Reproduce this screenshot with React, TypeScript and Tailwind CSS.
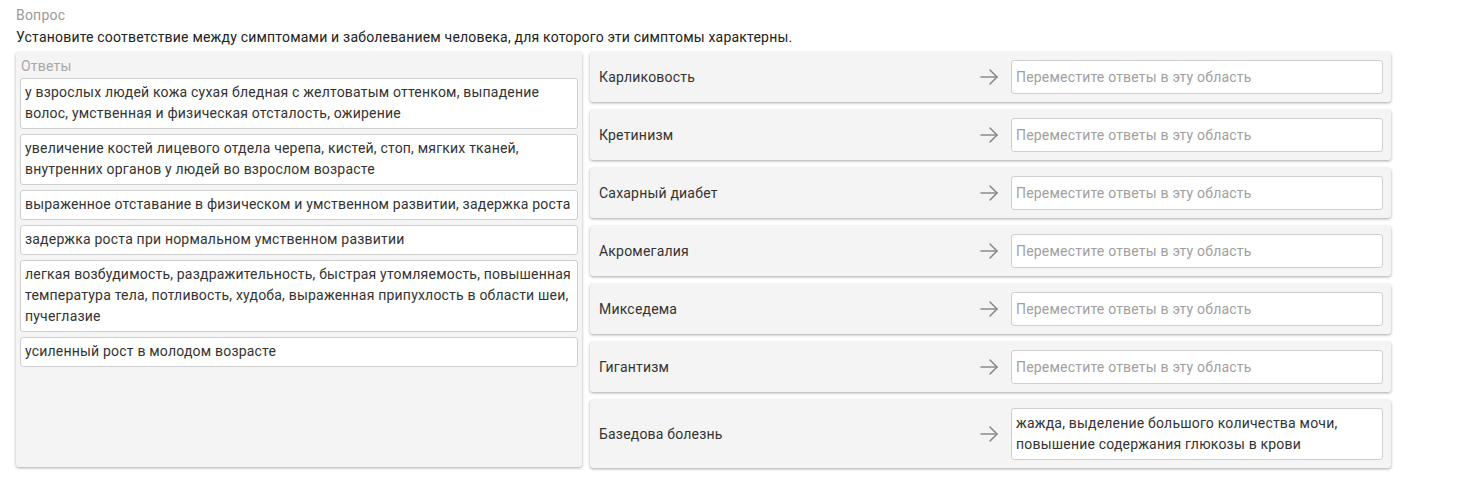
import React from "react";

const answers = [
  "у взрослых людей кожа сухая бледная с желтоватым оттенком, выпадение волос, умственная и физическая отсталость, ожирение",
  "увеличение костей лицевого отдела черепа, кистей, стоп, мягких тканей, внутренних органов у людей во взрослом возрасте",
  "выраженное отставание в физическом и умственном развитии, задержка роста",
  "задержка роста при нормальном умственном развитии",
  "легкая возбудимость, раздражительность, быстрая утомляемость, повышенная температура тела, потливость, худоба, выраженная припухлость в области шеи, пучеглазие",
  "усиленный рост в молодом возрасте",
];

const targets: { name: string; value?: string }[] = [
  { name: "Карликовость" },
  { name: "Кретинизм" },
  { name: "Сахарный диабет" },
  { name: "Акромегалия" },
  { name: "Микседема" },
  { name: "Гигантизм" },
  { name: "Базедова болезнь", value: "жажда, выделение большого количества мочи, повышение содержания глюкозы в крови" },
];

function Arrow() {
  return (
    <svg width="20" height="20" viewBox="0 0 20 20" fill="none" stroke="#8a8a8a" strokeWidth="1.6" strokeLinecap="round" strokeLinejoin="round">
      <path d="M2 10h16" />
      <path d="M11 3l7 7-7 7" />
    </svg>
  );
}

export default function App() {
  return (
    <div className="w-[1458px] h-[479px] bg-white pl-4 pt-[5px] text-[14px] leading-[21px] tracking-[0.2px] text-[#333]" style={{ fontFamily: "Roboto, 'Liberation Sans', sans-serif" }}>
      <div className="text-[#9a9a9a] leading-5">Вопрос</div>
      <div className="text-[#222] leading-5 mt-[2px]">Установите соответствие между симптомами и заболеванием человека, для которого эти симптомы характерны.</div>
      <div className="flex gap-2 mt-[5px] items-start">
        <div className="w-[566px] h-[415px] bg-[#f4f4f4] rounded-[3px] shadow-[0_1px_3px_rgba(0,0,0,0.35)] px-1 pt-[5px]">
          <div className="text-[#a8a8a8] leading-[18px] pl-[1px]">Ответы</div>
          <div className="flex flex-col gap-[5px] mt-[3px]">
            {answers.map((a) => (
              <div key={a} className="bg-white border border-[#cfcfcf] rounded-[3px] px-1 pt-[3px] pb-[4px]">
                {a}
              </div>
            ))}
          </div>
        </div>
        <div className="w-[801px] flex flex-col gap-2">
          {targets.map((t) => (
            <div key={t.name} className="bg-[#f4f4f4] rounded-[3px] shadow-[0_1px_3px_rgba(0,0,0,0.35)] flex items-center py-2 pl-[9px] pr-2">
              <div className="flex-1">{t.name}</div>
              <div className="mr-[12px] flex items-center"><Arrow /></div>
              <div className="w-[372px] min-h-[34px] bg-white border border-[#cfcfcf] rounded-[3px] px-1 py-[4px] flex items-center">
                {t.value ? <span>{t.value}</span> : <span className="text-[#a0a0a0]">Переместите ответы в эту область</span>}
              </div>
            </div>
          ))}
        </div>
      </div>
    </div>
  );
}
